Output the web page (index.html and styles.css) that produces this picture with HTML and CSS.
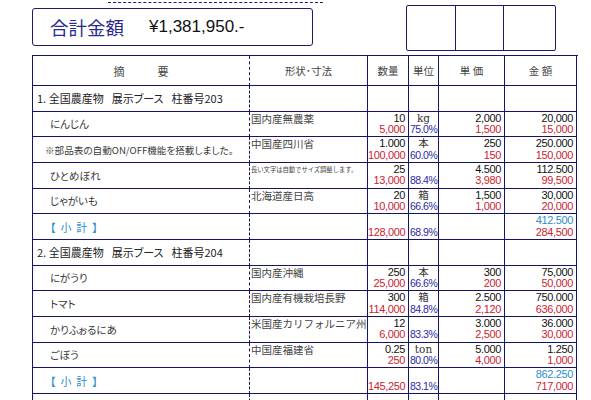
FILE: index.html
```html
<!DOCTYPE html>
<html lang="ja">
<head>
<meta charset="utf-8">
<link rel="stylesheet" href="styles.css">
</head>
<body>
<div class="page">
  <div class="head">
    <div class="head-left">
      <div class="dash"></div>
      <div class="total">
        <span class="total-label">合計金額</span>
        <span class="total-value">¥1,381,950.-</span>
      </div>
    </div>
    <div class="stamps">
      <div class="stamp s1"></div>
      <div class="stamp s2"></div>
      <div class="stamp s3"></div>
    </div>
  </div>

  <div class="sheet">
    <div class="c c1 th th-wide">摘　　　要</div>
    <div class="c th">形状･寸法</div>
    <div class="c th">数量</div>
    <div class="c th">単位</div>
    <div class="c th">単 価</div>
    <div class="c th">金 額</div>

    <div class="c c1 sec">1. 全国農産物<span class="gap"></span>展示ブース<span class="gap"></span>柱番号203</div>
    <div class="c"></div><div class="c"></div><div class="c"></div><div class="c"></div><div class="c"></div>

    <div class="c c1 item">にんじん</div>
    <div class="c form">国内産無農薬</div>
    <div class="c num"><div class="k">10</div><div class="r">5,000</div></div>
    <div class="c unit"><div class="u">kg</div><div class="p">75.0%</div></div>
    <div class="c num"><div class="k">2,000</div><div class="r">1,500</div></div>
    <div class="c num"><div class="k">20,000</div><div class="r">15,000</div></div>

    <div class="c c1 item note">※部品表の自動ON/OFF機能を搭載しました。</div>
    <div class="c form">中国産四川省</div>
    <div class="c num"><div class="k">1.000</div><div class="r">100,000</div></div>
    <div class="c unit"><div class="u">本</div><div class="p">60.0%</div></div>
    <div class="c num"><div class="k">250</div><div class="r">150</div></div>
    <div class="c num"><div class="k">250.000</div><div class="r">150,000</div></div>

    <div class="c c1 item">ひとめぼれ</div>
    <div class="c form tiny">長い文字は自動でサイズ調整します。</div>
    <div class="c num"><div class="k">25</div><div class="r">13,000</div></div>
    <div class="c unit"><div class="u"></div><div class="p">88.4%</div></div>
    <div class="c num"><div class="k">4.500</div><div class="r">3,980</div></div>
    <div class="c num"><div class="k">112.500</div><div class="r">99,500</div></div>

    <div class="c c1 item">じゃがいも</div>
    <div class="c form">北海道産日高</div>
    <div class="c num"><div class="k">20</div><div class="r">10,000</div></div>
    <div class="c unit"><div class="u">箱</div><div class="p">66.6%</div></div>
    <div class="c num"><div class="k">1,500</div><div class="r">1,000</div></div>
    <div class="c num"><div class="k">30,000</div><div class="r">20,000</div></div>

    <div class="c c1 item sub">【&nbsp;&nbsp;小&nbsp;&nbsp;計&nbsp;&nbsp;】</div>
    <div class="c form"></div>
    <div class="c num"><div class="k"></div><div class="r">128,000</div></div>
    <div class="c unit"><div class="u"></div><div class="p">68.9%</div></div>
    <div class="c num"></div>
    <div class="c num"><div class="b">412.500</div><div class="r">284,500</div></div>

    <div class="c c1 sec">2. 全国農産物<span class="gap"></span>展示ブース<span class="gap"></span>柱番号204</div>
    <div class="c"></div><div class="c"></div><div class="c"></div><div class="c"></div><div class="c"></div>

    <div class="c c1 item">にがうり</div>
    <div class="c form">国内産沖縄</div>
    <div class="c num"><div class="k">250</div><div class="r">25,000</div></div>
    <div class="c unit"><div class="u">本</div><div class="p">66.6%</div></div>
    <div class="c num"><div class="k">300</div><div class="r">200</div></div>
    <div class="c num"><div class="k">75,000</div><div class="r">50,000</div></div>

    <div class="c c1 item">トマト</div>
    <div class="c form">国内産有機栽培長野</div>
    <div class="c num"><div class="k">300</div><div class="r">114,000</div></div>
    <div class="c unit"><div class="u">箱</div><div class="p">84.8%</div></div>
    <div class="c num"><div class="k">2.500</div><div class="r">2,120</div></div>
    <div class="c num"><div class="k">750.000</div><div class="r">636,000</div></div>

    <div class="c c1 item">かりふぉるにあ</div>
    <div class="c form">米国産カリフォルニア州</div>
    <div class="c num"><div class="k">12</div><div class="r">6,000</div></div>
    <div class="c unit"><div class="u"></div><div class="p">83.3%</div></div>
    <div class="c num"><div class="k">3.000</div><div class="r">2,500</div></div>
    <div class="c num"><div class="k">36.000</div><div class="r">30,000</div></div>

    <div class="c c1 item">ごぼう</div>
    <div class="c form">中国産福建省</div>
    <div class="c num"><div class="k">0.25</div><div class="r">250</div></div>
    <div class="c unit"><div class="u">ton</div><div class="p">80.0%</div></div>
    <div class="c num"><div class="k">5.000</div><div class="r">4,000</div></div>
    <div class="c num"><div class="k">1.250</div><div class="r">1,000</div></div>

    <div class="c c1 item sub">【&nbsp;&nbsp;小&nbsp;&nbsp;計&nbsp;&nbsp;】</div>
    <div class="c form"></div>
    <div class="c num"><div class="k"></div><div class="r">145,250</div></div>
    <div class="c unit"><div class="u"></div><div class="p">83.1%</div></div>
    <div class="c num"></div>
    <div class="c num"><div class="b">862.250</div><div class="r">717,000</div></div>

    <div class="c c1"></div>
    <div class="c"></div><div class="c"></div><div class="c"></div><div class="c"></div><div class="c"></div>
  </div>
</div>
</body>
</html>
```

FILE: styles.css
```css
html, body {
  margin: 0;
  padding: 0;
  background: #ffffff;
}

body {
  font-family: "Noto Sans CJK JP", "Liberation Sans", sans-serif;
  color: #222;
}

.page {
  width: 591px;
  height: 400px;
  overflow: hidden;
  padding-left: 32px;
  box-sizing: border-box;
}

.head {
  display: flex;
  align-items: flex-start;
  height: 55px;
}

.head-left {
  width: 281px;
}

.dash {
  margin-left: 76px;
  margin-top: 2px;
  width: 215px;
  border-top: 1px dashed #1c1c6a;
}

.total {
  margin-top: 5px;
  height: 38px;
  box-sizing: border-box;
  border: 1px solid #1c1c6a;
  border-radius: 3px;
  display: flex;
  align-items: center;
  padding-left: 17px;
  gap: 25px;
}

.total-label {
  font-size: 18.5px;
  color: #2a2a8e;
}

.total-value {
  font-family: "Liberation Sans", Arial, sans-serif;
  font-size: 17px;
  color: #111;
}

.stamps {
  margin-left: 93px;
  margin-top: 5px;
  display: flex;
  height: 46px;
  border: 1px solid #1c1c6a;
  border-radius: 2px;
  box-sizing: border-box;
}

.stamp {
  height: 100%;
}

.s1 { width: 48px; border-right: 1px solid #1c1c6a; }
.s2 { width: 47px; border-right: 1px solid #1c1c6a; }
.s3 { width: 51px; }

.sheet {
  display: grid;
  grid-template-columns: 217px 118px 41px 30px 66px 72px;
  grid-template-rows: 30px repeat(13, 25.667px);
  width: 545px;
  border-top: 1px solid #14146b;
  border-left: 1px solid #14146b;
}

.c {
  box-sizing: border-box;
  border-right: 1px solid #14146b;
  border-bottom: 1px solid #14146b;
  overflow: hidden;
  min-width: 0;
}

.c1 {
  border-right: 1px dashed #14146b;
}

.th {
  display: flex;
  align-items: center;
  justify-content: center;
  font-size: 10.5px;
  color: #444;
  white-space: pre;
}

.th-wide {
  font-size: 11px;
}

.sec {
  display: flex;
  align-items: center;
  padding-left: 4px;
  font-size: 11px;
  color: #222;
  white-space: nowrap;
  font-feature-settings: "palt";
}

.gap {
  display: inline-block;
  width: 8px;
}

.item {
  display: flex;
  align-items: center;
  padding-left: 17px;
  font-size: 10.5px;
  color: #383838;
  font-feature-settings: "palt";
  white-space: nowrap;
}

.note {
  padding-left: 12px;
  font-size: 9.6px;
}

.sub {
  color: #2b8fcf;
  font-size: 11px;
}

.form {
  padding-left: 1px;
  padding-top: 0;
  font-size: 10.5px;
  line-height: 13px;
  color: #444;
  white-space: nowrap;
}

.tiny {
  font-size: 6.3px;
  line-height: 9px;
  padding-top: 2px;
}

.num {
  padding-top: 1px;
  padding-right: 3px;
  text-align: right;
  font-family: "Liberation Sans", Arial, sans-serif;
  font-size: 11px;
  line-height: 11.5px;
  letter-spacing: -0.35px;
}

.num > div {
  height: 11.5px;
}

.k { color: #111; }
.r { color: #cc2233; }
.b { color: #2b8fcf; }

.unit {
  padding-top: 1px;
  font-size: 11px;
  line-height: 11.5px;
}

.u {
  height: 11.5px;
  text-align: center;
  color: #333;
  font-family: "DejaVu Serif", "Noto Sans CJK JP", serif;
  font-size: 10.5px;
}

.p {
  height: 11.5px;
  padding-left: 1px;
  color: #2a2aa4;
  font-family: "Liberation Sans", Arial, sans-serif;
  font-size: 10.5px;
  letter-spacing: -0.5px;
  white-space: nowrap;
}
```
